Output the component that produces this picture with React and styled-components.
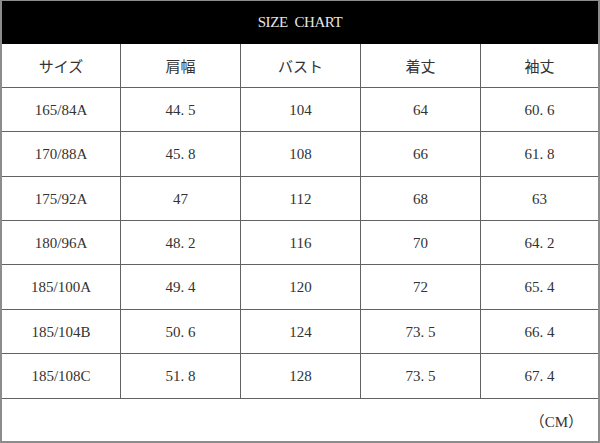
import React from 'react';
import styled, { createGlobalStyle } from 'styled-components';

const GlobalStyle = createGlobalStyle`
  html, body {
    margin: 0;
    padding: 0;
    background: #fff;
  }
`

const Chart = styled.div`
  width: 600px;
  height: 443px;
  box-sizing: border-box;
  border: 2px solid #8c8c8c;
  border-top-width: 1px;
  display: flex;
  flex-direction: column;
  background: #fff;
`

const Title = styled.div`
  height: 43px;
  flex: none;
  background: #000;
  color: #e6e6e6;
  display: flex;
  align-items: center;
  justify-content: center;
  font-family: "Liberation Serif", serif;
  font-size: 15px;
  letter-spacing: -0.4px;
  white-space: pre;
`

const Grid = styled.div`
  flex: 1;
  display: grid;
  grid-template-columns: 118px 119px 119px 119px 117px;
  grid-template-rows: 43px 43px 44px 43px 43px 44px 43px 44px 1fr;
  gap: 1px;
  background: #626262;
`

const Cell = styled.div`
  background: #fff;
  display: flex;
  align-items: center;
  justify-content: center;
  color: #333;
  font-family: ${p => p.$jp ? '"Noto Sans CJK JP", sans-serif' : '"Liberation Serif", serif'};
  font-size: 15px;
  padding-top: ${p => p.$jp ? '0' : '1px'};
`

const Dot = styled.span`
  margin-right: 0.25em;
`

const Footer = styled.div`
  grid-column: 1 / -1;
  background: #fff;
  display: flex;
  align-items: center;
  justify-content: flex-end;
  padding-right: 15px;
  color: #333;
  font-family: "Liberation Serif", "Noto Sans CJK JP", serif;
  font-size: 15px;
`

const headers = ['サイズ', '肩幅', 'バスト', '着丈', '袖丈']

const rows = [
  ['165/84A', '44.5', '104', '64', '60.6'],
  ['170/88A', '45.8', '108', '66', '61.8'],
  ['175/92A', '47', '112', '68', '63'],
  ['180/96A', '48.2', '116', '70', '64.2'],
  ['185/100A', '49.4', '120', '72', '65.4'],
  ['185/104B', '50.6', '124', '73.5', '66.4'],
  ['185/108C', '51.8', '128', '73.5', '67.4'],
]

const Value = ({ text }) => {
  const parts = text.split('.')
  if (parts.length === 1) return text
  return <>{parts[0]}<Dot>.</Dot>{parts[1]}</>
}

export default function App() {
  return (
    <>
      <GlobalStyle />
      <Chart>
        <Title>SIZE  CHART</Title>
        <Grid>
          {headers.map(h => <Cell key={h} $jp>{h}</Cell>)}
          {rows.map((row, i) =>
            row.map((v, j) => <Cell key={i + '-' + j}><Value text={v} /></Cell>)
          )}
          <Footer>（CM）</Footer>
        </Grid>
      </Chart>
    </>
  )
}
